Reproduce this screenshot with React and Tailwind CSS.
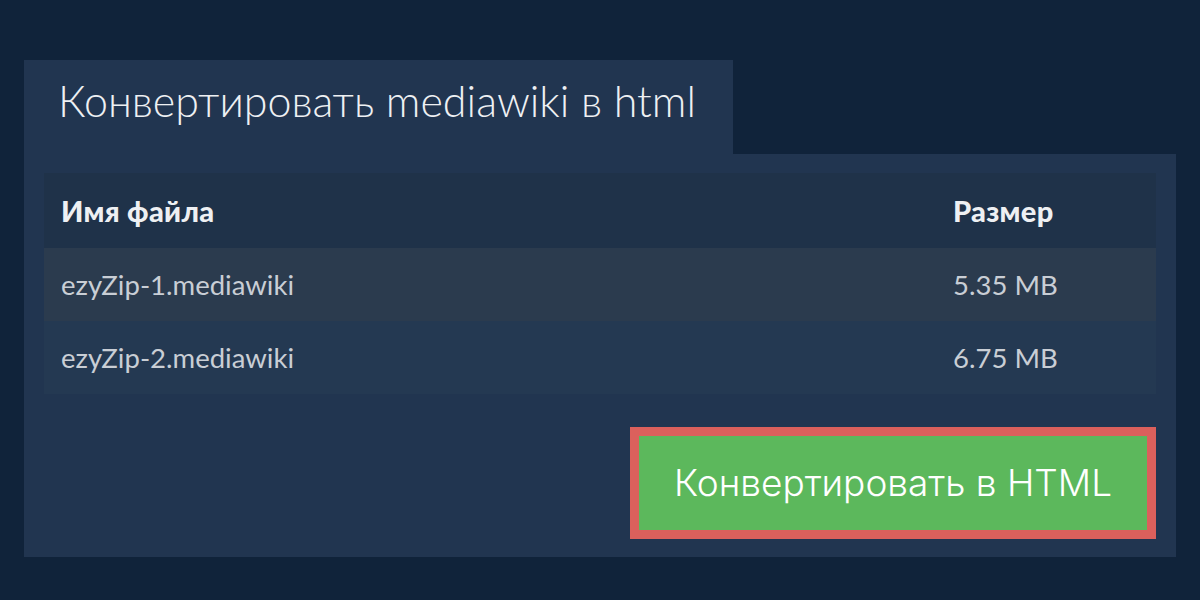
export default function App() {
  const rows = [
    { name: "ezyZip-1.mediawiki", size: "5.35 MB", bg: "bg-[#2b3b4e]" },
    { name: "ezyZip-2.mediawiki", size: "6.75 MB", bg: "bg-[#243952]" },
  ];
  return (
    <div className="w-[1200px] h-[600px] bg-[#10233a] pt-[60px] pl-6" style={{ fontFamily: "Lato, 'Noto Sans', sans-serif" }}>
      <div className="w-[709px] h-[94px] bg-[#213550] pl-[34px] pt-[15px]">
        <h1 className="text-[43px] font-light text-[#eef0f3] leading-[52px]">Конвертировать mediawiki в html</h1>
      </div>
      <div className="w-[1152px] h-[403px] bg-[#213550] px-5 pt-[19px]">
        <div className="flex flex-col">
          <div className="h-[75px] bg-[#1f3249] flex items-center pl-[17px] text-[29px] font-black tracking-[0.3px] text-[#eef0f3]">
            <div className="flex-1">Имя файла</div>
            <div className="w-[203px]">Размер</div>
          </div>
          {rows.map((r) => (
            <div key={r.name} className={`h-[73px] ${r.bg} flex items-center pl-[17px] text-[27.5px] text-[#c9ced5]`}>
              <div className="flex-1">{r.name}</div>
              <div className="w-[203px]">{r.size}</div>
            </div>
          ))}
        </div>
        <div className="flex justify-end mt-[33px]">
          <button className="w-[526px] h-[112px] border-[9px] border-[#db605c] bg-[#5cb85c] text-white text-[37px] font-light" style={{ fontFamily: "Inter, 'Noto Sans', sans-serif" }}>
            Конвертировать в HTML
          </button>
        </div>
      </div>
    </div>
  );
}
